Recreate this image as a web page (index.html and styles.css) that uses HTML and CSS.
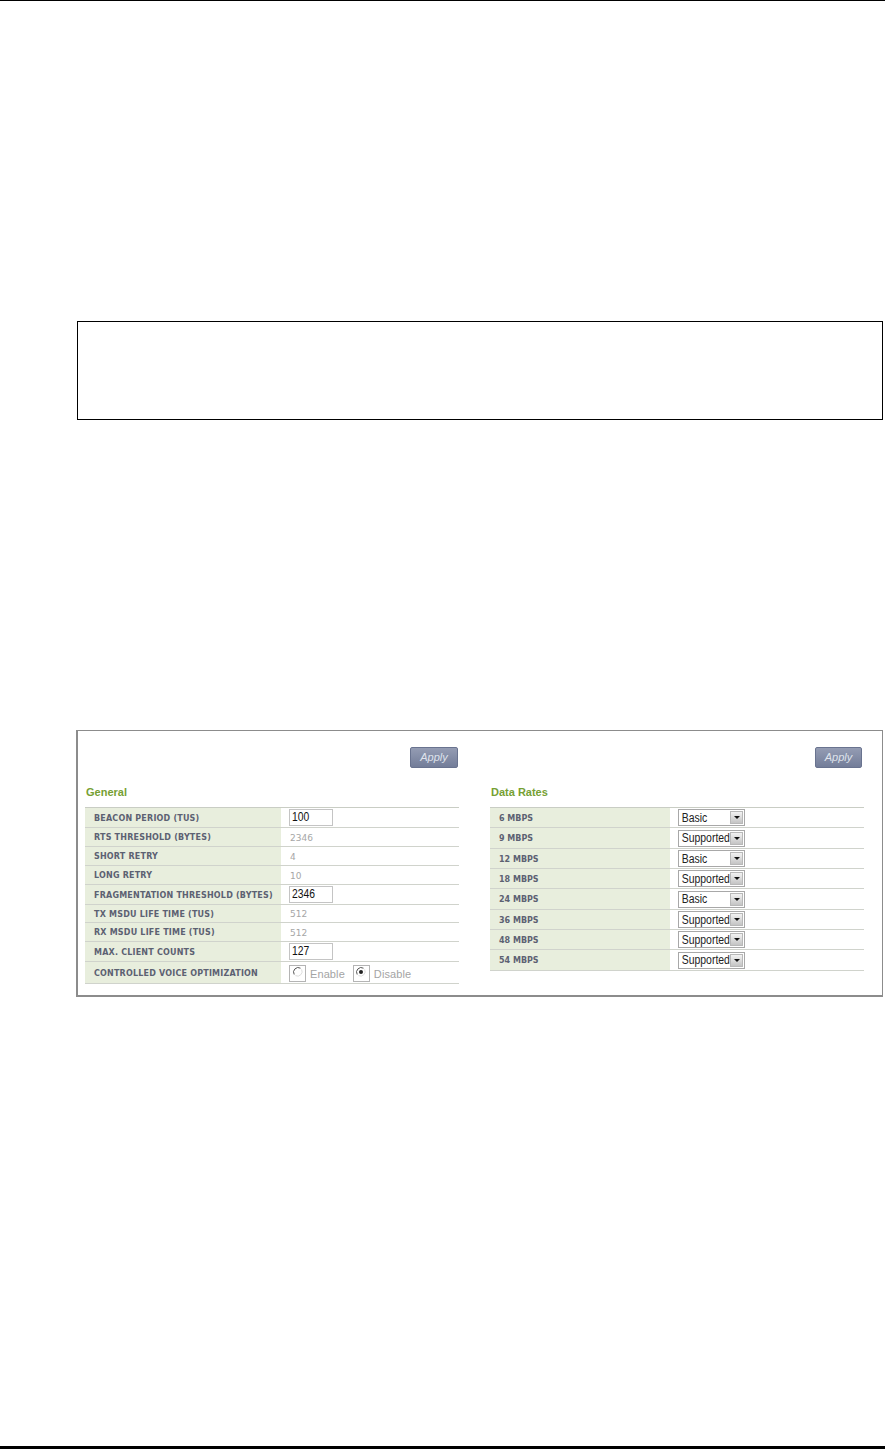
FILE: index.html
```html
<!DOCTYPE html>
<html lang="en">
<head>
<meta charset="utf-8">
<title>Advanced wireless settings</title>
<link rel="stylesheet" href="styles.css">
</head>
<body>
<div class="page">
  <header class="page-top"></header>
  <div class="note-box"></div>
  <section class="panel">
    <div class="col">
      <div class="apply-row"><span class="apply">Apply</span></div>
      <h2 class="title">General</h2>
      <div class="list list-general">
        <div class="row h20"><div class="label">BEACON PERIOD (TUS)</div><div class="val"><span class="input"><span class="num">100</span></span></div></div>
        <div class="row h19"><div class="label">RTS THRESHOLD (BYTES)</div><div class="val"><span class="static">2346</span></div></div>
        <div class="row h19"><div class="label">SHORT RETRY</div><div class="val"><span class="static">4</span></div></div>
        <div class="row h19"><div class="label">LONG RETRY</div><div class="val"><span class="static">10</span></div></div>
        <div class="row h20"><div class="label">FRAGMENTATION THRESHOLD (BYTES)</div><div class="val"><span class="input"><span class="num">2346</span></span></div></div>
        <div class="row h18"><div class="label">TX MSDU LIFE TIME (TUS)</div><div class="val"><span class="static">512</span></div></div>
        <div class="row h19"><div class="label">RX MSDU LIFE TIME (TUS)</div><div class="val"><span class="static">512</span></div></div>
        <div class="row h20"><div class="label">MAX. CLIENT COUNTS</div><div class="val"><span class="input"><span class="num">127</span></span></div></div>
        <div class="row h22"><div class="label">CONTROLLED VOICE OPTIMIZATION</div><div class="val">
          <span class="radio-box"><svg class="radio" viewBox="0 0 12 12"><path class="r-dark" d="M2.2 8.5A4.6 4.6 0 0 1 8.5 2.2"/><path class="r-light" d="M9.6 3.4A4.6 4.6 0 0 1 3.4 9.6"/></svg></span><span class="radio-text">Enable</span>
          <span class="radio-box second"><svg class="radio" viewBox="0 0 12 12"><path class="r-dark" d="M2.2 8.5A4.6 4.6 0 0 1 8.5 2.2"/><path class="r-light" d="M9.6 3.4A4.6 4.6 0 0 1 3.4 9.6"/><circle class="r-dot" cx="6" cy="6" r="2"/></svg></span><span class="radio-text">Disable</span>
        </div></div>
      </div>
    </div>
    <div class="col">
      <div class="apply-row apply-row-right"><span class="apply apply-narrow">Apply</span></div>
      <h2 class="title title-right">Data Rates</h2>
      <div class="list list-rates">
        <div class="row h20"><div class="label">6 MBPS</div><div class="val"><span class="select"><span class="sel-text">Basic</span><span class="sel-btn"><i class="arrow"></i></span></span></div></div>
        <div class="row h21"><div class="label">9 MBPS</div><div class="val"><span class="select"><span class="sel-text">Supported</span><span class="sel-btn"><i class="arrow"></i></span></span></div></div>
        <div class="row h20"><div class="label">12 MBPS</div><div class="val"><span class="select"><span class="sel-text">Basic</span><span class="sel-btn"><i class="arrow"></i></span></span></div></div>
        <div class="row h20"><div class="label">18 MBPS</div><div class="val"><span class="select"><span class="sel-text">Supported</span><span class="sel-btn"><i class="arrow"></i></span></span></div></div>
        <div class="row h21"><div class="label">24 MBPS</div><div class="val"><span class="select"><span class="sel-text">Basic</span><span class="sel-btn"><i class="arrow"></i></span></span></div></div>
        <div class="row h20"><div class="label">36 MBPS</div><div class="val"><span class="select"><span class="sel-text">Supported</span><span class="sel-btn"><i class="arrow"></i></span></span></div></div>
        <div class="row h20"><div class="label">48 MBPS</div><div class="val"><span class="select"><span class="sel-text">Supported</span><span class="sel-btn"><i class="arrow"></i></span></span></div></div>
        <div class="row h21"><div class="label">54 MBPS</div><div class="val"><span class="select"><span class="sel-text">Supported</span><span class="sel-btn"><i class="arrow"></i></span></span></div></div>
      </div>
    </div>
  </section>
  <footer class="page-bottom"></footer>
</div>
</body>
</html>
```
FILE: styles.css
```css
* { box-sizing: border-box; }
html, body { margin: 0; padding: 0; background: #fff; }
.page {
  width: 885px;
  height: 1449px;
  display: flex;
  flex-direction: column;
  overflow: hidden;
}
.page-top { height: 1px; background: #000; }
.note-box {
  margin: 320px 2px 0 77px;
  height: 99px;
  border: 1px solid #000;
}
.panel {
  margin: 310px 2px 0 76px;
  height: 267px;
  border: 1px solid #8c8c8c;
  border-width: 1px 1px 2px 2px;
  padding: 16px 18px 0 7px;
  display: grid;
  grid-template-columns: 374px 374px;
  column-gap: 31px;
  align-items: start;
}
.apply-row {
  display: flex;
  justify-content: flex-end;
  padding-right: 1px;
  height: 21px;
}
.apply-row-right { padding-right: 2px; }
.apply {
  width: 48px;
  height: 21px;
  border-radius: 2px;
  background: linear-gradient(#949cb3, #737d99);
  border: 1px solid #69738f;
  color: #dfe3ec;
  font: italic 11px/19px "Liberation Sans", Arial, sans-serif;
  text-align: center;
}
.apply-narrow { width: 47px; }
.title {
  margin: 0;
  height: 39px;
  padding: 17px 0 0 1px;
  color: #76a033;
  font: bold 11px/14px "Liberation Sans", Arial, sans-serif;
}
.list { border-top: 1px solid #c9cdc4; }
.row {
  display: flex;
  border-bottom: 1px solid #d0d3cc;
}
.h18 { height: 18px; }
.h19 { height: 19px; }
.h20 { height: 20px; }
.h21 { height: 21px; }
.h22 { height: 22px; }
.label {
  background: #e8eedd;
  display: flex;
  align-items: center;
  padding-top: 2px;
  color: #5c6172;
  font: bold 8px/12px "DejaVu Sans", Verdana, sans-serif;
  white-space: nowrap;
}
.list-general .label { width: 196px; padding-left: 9px; letter-spacing: 0.2px; }
.list-rates .label { width: 180px; padding-left: 9px; }
.val {
  flex: 1;
  display: flex;
  align-items: center;
}
.list-general .val { padding-left: 8px; }
.list-rates .val { padding-left: 8px; }
.static {
  color: #a6a6a6;
  font: 9px/12px "DejaVu Sans", Verdana, sans-serif;
  padding: 1px 0 0 1px;
}
.input {
  width: 44px;
  height: 17px;
  border: 1px solid #c4c4c4;
  padding-left: 2px;
  color: #111;
  font: 12px/15px "Liberation Sans", Arial, sans-serif;
}
.num {
  display: inline-block;
  transform: scaleX(0.86);
  transform-origin: left center;
}
.radio-box {
  width: 17px;
  height: 17px;
  border: 1px solid #b4b4b4;
  display: flex;
  align-items: center;
  justify-content: center;
  margin-top: 1px;
}
.second { margin-left: 8px; }
.radio { width: 12px; height: 12px; margin-top: -3px; }
.r-dark, .r-light { fill: none; stroke-width: 1; }
.r-dark { stroke: #555; }
.r-light { stroke: #ddd; }
.r-dot { fill: #222; }
.radio-text {
  margin-left: 4px;
  margin-top: 3px;
  color: #a4a4a4;
  font: 11px/14px "Liberation Sans", Arial, sans-serif;
  letter-spacing: 0.1px;
}
.select {
  width: 67px;
  height: 17px;
  border: 1px solid #a8a8a8;
  display: flex;
  align-items: center;
  justify-content: space-between;
  padding: 1px;
}
.sel-text {
  display: inline-block;
  padding: 1px 0 0 2px;
  color: #222;
  font: 12px/15px "Liberation Sans", Arial, sans-serif;
  transform: scaleX(0.87);
  transform-origin: left center;
  width: 50px;
  flex-shrink: 0;
  white-space: nowrap;
}
.sel-btn {
  width: 13px;
  height: 13px;
  flex-shrink: 0;
  background: linear-gradient(#f2f2f2, #c4c4c4);
  border: 1px solid #b8b8b8;
  display: flex;
  align-items: center;
  justify-content: center;
}
.arrow {
  width: 0;
  height: 0;
  border-left: 3px solid transparent;
  border-right: 3px solid transparent;
  border-top: 3px solid #111;
}
.page-bottom {
  margin-top: auto;
  height: 3px;
  background: #000;
}
```
